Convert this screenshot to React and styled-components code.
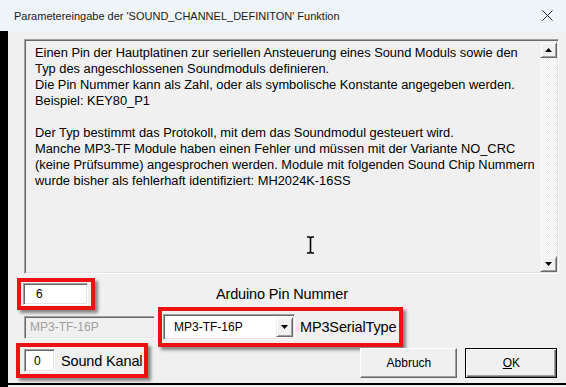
import React from 'react';
import styled, { createGlobalStyle } from 'styled-components';

const GlobalStyle = createGlobalStyle`
  html, body {
    margin: 0;
    padding: 0;
    background: #f0f0f0;
  }
`;

const Window = styled.div`
  width: 566px;
  height: 387px;
  display: flex;
  flex-direction: column;
  background: #f0f0f0;
  overflow: hidden;
  font-family: "Liberation Sans", Arial, sans-serif;
`;

const TitleBar = styled.div`
  height: 31px;
  flex: none;
  display: flex;
  align-items: center;
  justify-content: space-between;
  padding: 0 13px 0 14px;
  background: #eff4f9;
  color: #1b1b1b;
  font-size: 11px;
`;

const CloseIcon = () => (
  <svg width="11" height="11" viewBox="0 0 11 11">
    <path d="M0.5 0.5 L10.5 10.5 M10.5 0.5 L0.5 10.5" stroke="#222" strokeWidth="1" />
  </svg>
);

const Frame = styled.div`
  flex: 1;
  display: flex;
  min-height: 0;
`;

const Edge = styled.div`
  width: 8px;
  flex: none;
  background: #000;
`;

const Client = styled.div`
  flex: 1;
  display: flex;
  flex-direction: column;
`;

const Panel = styled.div`
  flex: 1;
  display: flex;
  flex-direction: column;
  padding: 8px 7px 0 9px;
`;

const BottomRule = styled.div`
  height: 2px;
  margin-bottom: 2px;
  background: #000;
`;

const TextBox = styled.div`
  position: relative;
  height: 235px;
  margin-left: 7px;
  box-sizing: border-box;
  display: flex;
  border: 1px solid;
  border-color: #a0a0a0 #fff #fff #a0a0a0;
  box-shadow: inset 1px 1px #696969, inset -1px -1px #e3e3e3;
`;

const Description = styled.div`
  flex: 1;
  padding: 5px 0 0 10px;
  font-size: 12.85px;
  line-height: 16px;
  color: #000;
  white-space: pre;
`;

const ScrollBar = styled.div`
  width: 17px;
  margin: 2px 1px 1px 0;
  display: flex;
  flex-direction: column;
  justify-content: space-between;
  background: repeating-conic-gradient(#ffffff 0 25%, #ececec 0 50%) 0 0 / 2px 2px;
`;

const RaisedButton = styled.div`
  width: 17px;
  height: 16px;
  box-sizing: border-box;
  display: flex;
  align-items: center;
  justify-content: center;
  background: #f0f0f0;
  border: 1px solid;
  border-color: #f0f0f0 #696969 #696969 #f0f0f0;
  box-shadow: inset 1px 1px #fff, inset -1px -1px #a0a0a0;
`;

const Arrow = ({ up }) => (
  <svg width="7" height="4" viewBox="0 0 7 4">
    <path d={up ? 'M3.5 0 L7 4 L0 4 Z' : 'M0 0 L7 0 L3.5 4 Z'} fill="#000" />
  </svg>
);

const Cursor = styled.svg`
  position: absolute;
  left: 281px;
  top: 196px;
`;

const Row = styled.div`
  display: flex;
  align-items: ${(p) => p.$align || 'center'};
  margin-top: ${(p) => p.$top || 0}px;
`;

const Highlight = styled.div`
  display: flex;
  align-items: center;
  box-sizing: border-box;
  height: ${(p) => p.$h}px;
  margin-left: ${(p) => p.$left || 0}px;
  padding: ${(p) => p.$pad};
  border: 4px solid #ee1111;
  box-shadow: 3px 3px 3px rgba(0, 0, 0, 0.45);
`;

const Field = styled.div`
  box-sizing: border-box;
  width: ${(p) => p.$w}px;
  height: ${(p) => p.$h}px;
  margin-left: ${(p) => p.$left || 0}px;
  display: flex;
  align-items: center;
  padding-left: ${(p) => p.$indent || 4}px;
  background: ${(p) => (p.$disabled ? '#f0f0f0' : '#fff')};
  color: ${(p) => (p.$disabled ? '#a0a0a0' : '#000')};
  font-size: 12px;
  border: 1px solid;
  border-color: #a0a0a0 #fff #fff #a0a0a0;
  box-shadow: inset 1px 1px #696969, inset -1px -1px #e3e3e3;
`;

const Combo = styled(Field)`
  justify-content: space-between;
  padding-right: 1px;
`;

const ComboButton = styled(RaisedButton)`
  height: 20px;
`;

const Label = styled.span`
  margin-left: ${(p) => p.$left || 0}px;
  font-size: 14.5px;
  letter-spacing: -0.15px;
  color: #000;
  white-space: nowrap;
`;

const Button = styled.div`
  box-sizing: border-box;
  width: ${(p) => p.$w}px;
  height: 30px;
  margin-top: 5px;
  margin-left: ${(p) => p.$left}px;
  display: flex;
  align-items: center;
  justify-content: center;
  font-size: 12px;
  color: #000;
  background: #f0f0f0;
  border: 1px solid;
  border-color: ${(p) => (p.$default ? '#000' : '#fff #696969 #696969 #fff')};
  box-shadow: ${(p) =>
    p.$default
      ? 'inset 1px 1px #fff, inset -1px -1px #696969, inset -2px -2px #a0a0a0'
      : 'inset -1px -1px #a0a0a0'};
`;

const Mnemonic = styled.span`
  text-decoration: underline;
`;

const text = `Einen Pin der Hautplatinen zur seriellen Ansteuerung eines Sound Moduls sowie den
Typ des angeschlossenen Soundmoduls definieren.
Die Pin Nummer kann als Zahl, oder als symbolische Konstante angegeben werden.
Beispiel: KEY80_P1

Der Typ bestimmt das Protokoll, mit dem das Soundmodul gesteuert wird.
Manche MP3-TF Module haben einen Fehler und müssen mit der Variante NO_CRC
(keine Prüfsumme) angesprochen werden. Module mit folgenden Sound Chip Nummern
wurde bisher als fehlerhaft identifiziert: MH2024K-16SS`;

export default function App() {
  return (
    <Window>
      <GlobalStyle />
      <TitleBar>
        <span>Parametereingabe der 'SOUND_CHANNEL_DEFINITON' Funktion</span>
        <CloseIcon />
      </TitleBar>
      <Frame>
        <Edge />
        <Client>
          <Panel>
            <TextBox>
              <Description>{text}</Description>
              <ScrollBar>
                <RaisedButton>
                  <Arrow up />
                </RaisedButton>
                <RaisedButton>
                  <Arrow />
                </RaisedButton>
              </ScrollBar>
              <Cursor width="9" height="18" viewBox="0 0 9 18">
                <path
                  d="M1 1 H3.5 L4.5 2 L5.5 1 H8 M4.5 2 V16 M1 17 H3.5 L4.5 16 L5.5 17 H8"
                  stroke="#000"
                  strokeWidth="1.6"
                  fill="none"
                />
              </Cursor>
            </TextBox>

            <Row $top={4}>
              <Highlight $h={32} $pad="0 3px 0 2px">
                <Field $w={65} $h={22} $indent={12}>6</Field>
              </Highlight>
              <Label $left={121}>Arduino Pin Nummer</Label>
            </Row>

            <Row $top={-3}>
              <Field $w={131} $h={23} $left={7} $indent={5} $disabled>
                MP3-TF-16P
              </Field>
              <Highlight $h={40} $left={3} $pad="0 3px 0 1px">
                <Combo $w={132} $h={26} $indent={10}>
                  MP3-TF-16P
                  <ComboButton>
                    <Arrow />
                  </ComboButton>
                </Combo>
                <Label $left={5}>MP3SerialType</Label>
              </Highlight>
            </Row>

            <Row $top={-4} $align="flex-start">
              <Highlight $h={35} $left={-1} $pad="0 2px 0 4px">
                <Field $w={31} $h={23} $indent={9}>0</Field>
                <Label $left={6}>Sound Kanal</Label>
              </Highlight>
              <Button $w={97} $left={212}>
                Abbruch
              </Button>
              <Button $w={92} $left={8} $default>
                <Mnemonic>O</Mnemonic>K
              </Button>
            </Row>
          </Panel>
          <BottomRule />
        </Client>
      </Frame>
    </Window>
  );
}
